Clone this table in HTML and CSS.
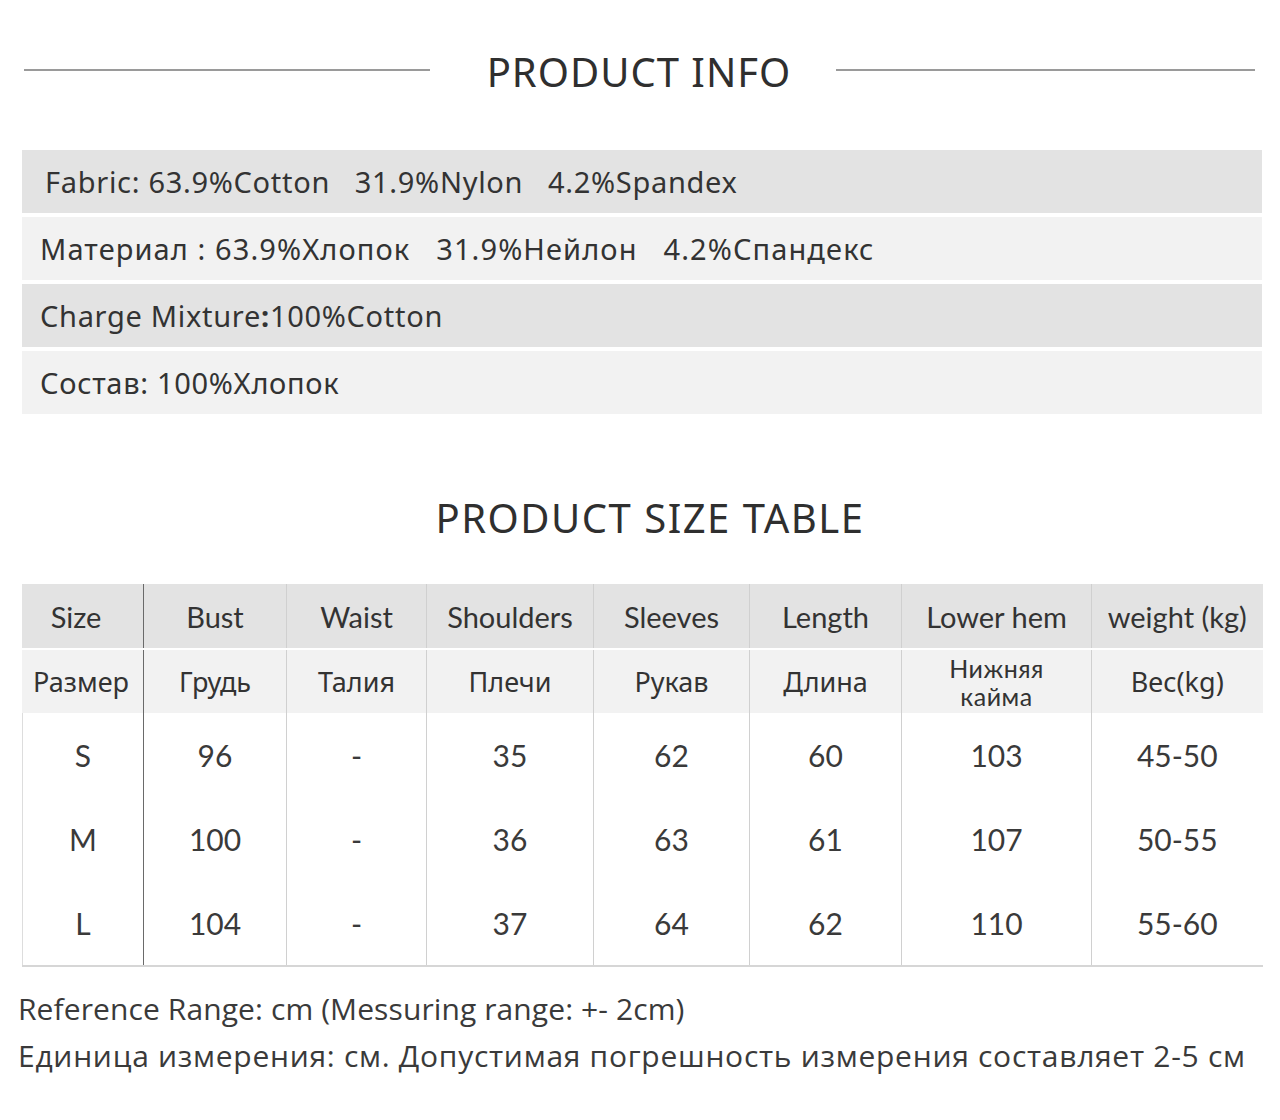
FILE: index.html
```html
<!DOCTYPE html>
<html lang="en">
<head>
<meta charset="utf-8">
<title>Product info</title>
<link rel="stylesheet" href="styles.css">
</head>
<body>
<div class="page">
  <div class="section-head">
    <span class="rule"></span>
    <h1 class="title head-title">PRODUCT INFO</h1>
    <span class="rule"></span>
  </div>

  <div class="info">
    <div class="info-row dark first">Fabric: 63.9%Cotton&nbsp;&nbsp; 31.9%Nylon&nbsp;&nbsp; 4.2%Spandex</div>
    <div class="info-row light ru">Материал : 63.9%Хлопок&nbsp;&nbsp; 31.9%Нейлон&nbsp;&nbsp; 4.2%Спандекс</div>
    <div class="info-row dark">Charge Mixture<span class="colon">:</span>100%Cotton</div>
    <div class="info-row light">Состав: 100%Хлопок</div>
  </div>

  <h2 class="title size-title">PRODUCT SIZE TABLE</h2>

  <table class="sizes">
    <colgroup>
      <col class="c1"><col class="c2"><col class="c3"><col class="c4">
      <col class="c5"><col class="c6"><col class="c7"><col class="c8">
    </colgroup>
    <thead>
      <tr class="h-en">
        <th>Size</th><th>Bust</th><th>Waist</th><th>Shoulders</th><th>Sleeves</th><th>Length</th><th>Lower hem</th><th>weight (kg)</th>
      </tr>
      <tr class="h-ru">
        <th>Размер</th><th>Грудь</th><th>Талия</th><th>Плечи</th><th>Рукав</th><th>Длина</th><th class="two"><span class="ln">Нижняя</span><span class="ln">кайма</span></th><th>Вес(kg)</th>
      </tr>
    </thead>
    <tbody>
      <tr><td>S</td><td>96</td><td>-</td><td>35</td><td>62</td><td>60</td><td>103</td><td>45-50</td></tr>
      <tr><td>M</td><td>100</td><td>-</td><td>36</td><td>63</td><td>61</td><td>107</td><td>50-55</td></tr>
      <tr><td>L</td><td>104</td><td>-</td><td>37</td><td>64</td><td>62</td><td>110</td><td>55-60</td></tr>
    </tbody>
  </table>

  <div class="notes">
    <p>Reference Range: cm (Messuring range: +- 2cm)</p>
    <p class="ru-note">Единица измерения: см. Допустимая погрешность измерения составляет 2-5 см</p>
  </div>
</div>
</body>
</html>
```

FILE: styles.css
```css
html, body {
  margin: 0;
  padding: 0;
  background: #ffffff;
}

body {
  font-family: "Noto Sans", "Open Sans", sans-serif;
  color: #333333;
}

.page {
  width: 1280px;
  height: 1120px;
  overflow: hidden;
}

.section-head {
  display: grid;
  grid-template-columns: 406px 1fr 419px;
  align-items: center;
  padding: 46px 25px 0 24px;
  height: 52px;
}

.rule {
  display: block;
  height: 2px;
  background: #9a9a9a;
  margin-top: -4px;
}

.title {
  margin: 0;
  font-weight: 400;
  font-size: 40px;
  letter-spacing: 1px;
  line-height: 52px;
  text-align: center;
  color: #2f2f2f;
}

.head-title {
  padding-left: 12px;
}

.info {
  margin: 52px 18px 0 22px;
  display: flex;
  flex-direction: column;
  gap: 4px;
}

.info-row {
  height: 63px;
  display: flex;
  align-items: center;
  padding-left: 18px;
  font-size: 29px;
  letter-spacing: 0.7px;
  color: #333;
  white-space: pre;
}

.info-row.ru {
  letter-spacing: 1.1px;
}

.info-row.first {
  padding-left: 23px;
}

.info-row.dark {
  background: #e3e3e3;
}

.info-row.light {
  background: #f2f2f2;
}

.colon {
  font-weight: 700;
}

.size-title {
  margin-top: 78px;
  padding-left: 20px;
  letter-spacing: 1.5px;
}

.sizes {
  margin: 40px 0 0 22px;
  width: 1240px;
  border-collapse: collapse;
  table-layout: fixed;
  font-family: Lato, "Noto Sans", sans-serif;
  color: #333;
}

.c1 { width: 121px; }
.c2 { width: 143px; }
.c3 { width: 140px; }
.c4 { width: 167px; }
.c5 { width: 156px; }
.c6 { width: 152px; }
.c7 { width: 190px; }
.c8 { width: 171px; }

.sizes th,
.sizes td {
  text-align: center;
  padding: 0;
  border-left: 1px solid #d0d0d0;
}

.sizes th:first-child,
.sizes td:first-child {
  border-left: 1px solid #dddddd;
}

.sizes th:nth-child(2),
.sizes td:nth-child(2) {
  border-left: 1px solid #6a6a6a;
}

.h-en th {
  height: 64px;
  background: #e3e3e3;
  font-size: 29px;
  font-weight: 400;
  border-bottom: 2px solid #ffffff;
}

.h-en th:first-child {
  border-left-color: #e3e3e3;
  padding-right: 14px;
}

.h-ru th {
  height: 63px;
  background: #f2f2f2;
  font-size: 27px;
  font-weight: 400;
  font-family: "Noto Sans", sans-serif;
}

.h-ru th:first-child {
  border-left-color: #f2f2f2;
  padding-right: 4px;
}

.h-ru th.two {
  font-family: Lato, "Noto Sans", sans-serif;
  font-size: 25px;
  line-height: 28px;
  letter-spacing: 0.5px;
}

.h-ru th.two .ln {
  display: block;
}

.sizes td {
  height: 84px;
  font-size: 30px;
  color: #3a3a3a;
}

.sizes tbody tr:last-child td {
  border-bottom: 2px solid #d6d6d6;
}

.notes {
  margin: 18px 0 0 18px;
  font-family: "Open Sans", "Noto Sans", sans-serif;
  color: #3a3a3a;
}

.notes p {
  margin: 0;
  font-size: 30px;
  line-height: 47px;
  letter-spacing: 0.1px;
}

.notes p.ru-note {
  letter-spacing: 0.72px;
}
```
